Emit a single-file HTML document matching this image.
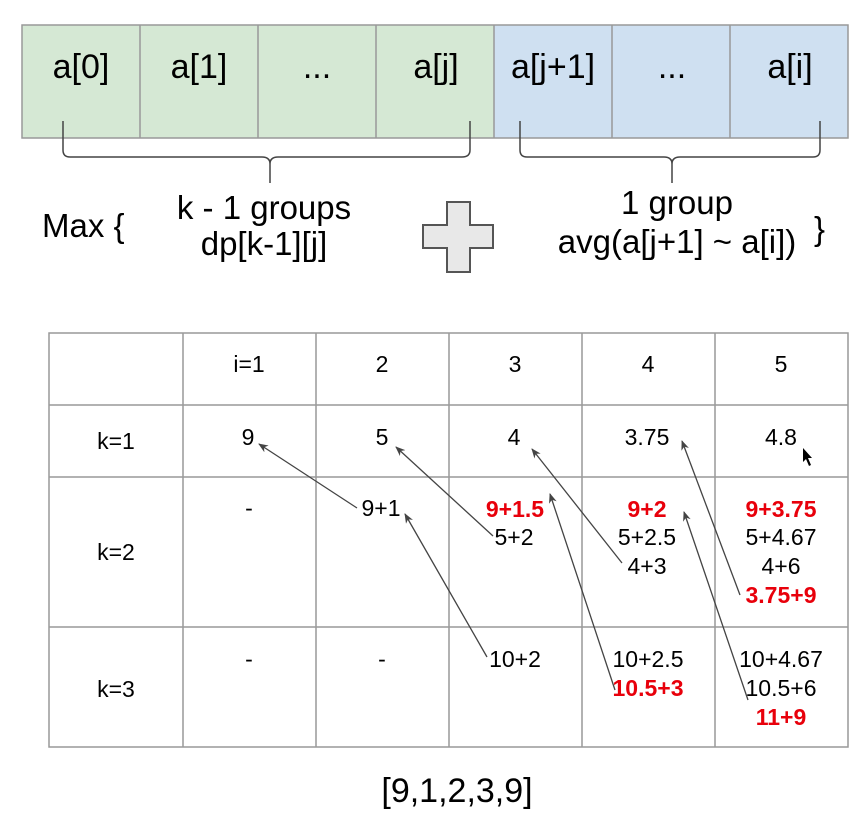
<!DOCTYPE html>
<html><head><style>
html,body{margin:0;padding:0;background:#fff;}
svg{display:block;}
text{font-family:"Liberation Sans",Arial,sans-serif;}
</style></head><body>
<svg width="863" height="818" viewBox="0 0 863 818" xmlns="http://www.w3.org/2000/svg">
<defs>
<marker id="ah" markerWidth="10" markerHeight="8" refX="9" refY="4" orient="auto" markerUnits="userSpaceOnUse">
<path d="M0,0 L10,4 L0,8 L3,4 Z" fill="#444"/>
</marker>
</defs>
<rect x="22" y="25" width="472" height="113" fill="#d5e8d4"/>
<rect x="494" y="25" width="354" height="113" fill="#cfe0f1"/>
<g stroke="#999" stroke-width="1.5" fill="none">
<rect x="22" y="25" width="826" height="113"/>
<line x1="140" y1="25" x2="140" y2="138"/><line x1="258" y1="25" x2="258" y2="138"/>
<line x1="376" y1="25" x2="376" y2="138"/><line x1="494" y1="25" x2="494" y2="138"/>
<line x1="612" y1="25" x2="612" y2="138"/><line x1="730" y1="25" x2="730" y2="138"/>
</g>
<g font-size="34" text-anchor="middle" fill="#000">
<text x="81" y="78">a[0]</text><text x="199" y="78">a[1]</text><text x="317" y="78">...</text>
<text x="436" y="78">a[j]</text><text x="553" y="78">a[j+1]</text><text x="672" y="78">...</text><text x="790" y="78">a[i]</text>
</g>
<g stroke="#444" stroke-width="1.5" fill="none">
<path d="M63,121 L63,150 Q63,157 70,157 L262,157 Q270,157 270,164 L270,183 M270,164 Q270,157 278,157 L462,157 Q470,157 470,150 L470,121"/>
<path d="M520,121 L520,150 Q520,157 527,157 L664,157 Q672,157 672,164 L672,183 M672,164 Q672,157 680,157 L813,157 Q820,157 820,150 L820,121"/>
</g>
<g font-size="33" fill="#000">
<text x="42" y="237">Max {</text>
<text x="264" y="219" text-anchor="middle">k - 1 groups</text>
<text x="264" y="255" text-anchor="middle">dp[k-1][j]</text>
<text x="677" y="214" text-anchor="middle">1 group</text>
<text x="677" y="253" text-anchor="middle">avg(a[j+1] ~ a[i])</text>
<text x="814" y="240">}</text>
</g>
<path d="M447,202 L470,202 L470,225 L493,225 L493,248 L470,248 L470,272 L447,272 L447,248 L423,248 L423,225 L447,225 Z" fill="#e8e8e8" stroke="#555" stroke-width="2"/>
<g stroke="#999" stroke-width="1.5" fill="none">
<rect x="49" y="333" width="799" height="414"/>
<line x1="49" y1="405" x2="848" y2="405"/><line x1="49" y1="477" x2="848" y2="477"/><line x1="49" y1="627" x2="848" y2="627"/>
<line x1="183" y1="333" x2="183" y2="747"/><line x1="316" y1="333" x2="316" y2="747"/><line x1="449" y1="333" x2="449" y2="747"/>
<line x1="582" y1="333" x2="582" y2="747"/><line x1="715" y1="333" x2="715" y2="747"/>
</g>
<g font-size="23" text-anchor="middle" fill="#000">
<text x="249" y="372">i=1</text><text x="382" y="372">2</text><text x="515" y="372">3</text><text x="648" y="372">4</text><text x="781" y="372">5</text>
<text x="116" y="449">k=1</text><text x="248" y="445">9</text><text x="382" y="445">5</text><text x="514" y="445">4</text><text x="647" y="445">3.75</text><text x="781" y="445">4.8</text>
<text x="116" y="560">k=2</text><text x="249" y="516">-</text><text x="381" y="516">9+1</text>
<text x="514" y="545">5+2</text>
<text x="647" y="545">5+2.5</text><text x="647" y="574">4+3</text>
<text x="781" y="545">5+4.67</text><text x="781" y="574">4+6</text>
<text x="116" y="697">k=3</text><text x="249" y="667">-</text><text x="382" y="667">-</text>
<text x="515" y="667">10+2</text><text x="648" y="667">10+2.5</text>
<text x="781" y="667">10+4.67</text><text x="781" y="696">10.5+6</text>
</g>
<g font-size="23" font-weight="bold" text-anchor="middle" fill="#e8000b">
<text x="515" y="517">9+1.5</text><text x="647" y="517">9+2</text><text x="781" y="517">9+3.75</text>
<text x="781" y="603">3.75+9</text><text x="648" y="696">10.5+3</text><text x="781" y="725">11+9</text>
</g>
<g stroke="#444" stroke-width="1.3" fill="none" marker-end="url(#ah)">
<line x1="357" y1="508" x2="259" y2="444"/>
<line x1="493" y1="536" x2="396" y2="447"/>
<line x1="622" y1="563" x2="532" y2="449"/>
<line x1="740" y1="595" x2="682" y2="441"/>
<line x1="487" y1="657" x2="405" y2="514"/>
<line x1="615" y1="690" x2="550" y2="494"/>
<line x1="748" y1="700" x2="684" y2="512"/>
</g>
<path d="M803,448 L803,462 L806,459 L809,466 L811,465 L808,458 L812,458 Z" fill="#000"/>
<text x="457" y="802" font-size="34" text-anchor="middle" fill="#000">[9,1,2,3,9]</text>
</svg>
</body></html>
